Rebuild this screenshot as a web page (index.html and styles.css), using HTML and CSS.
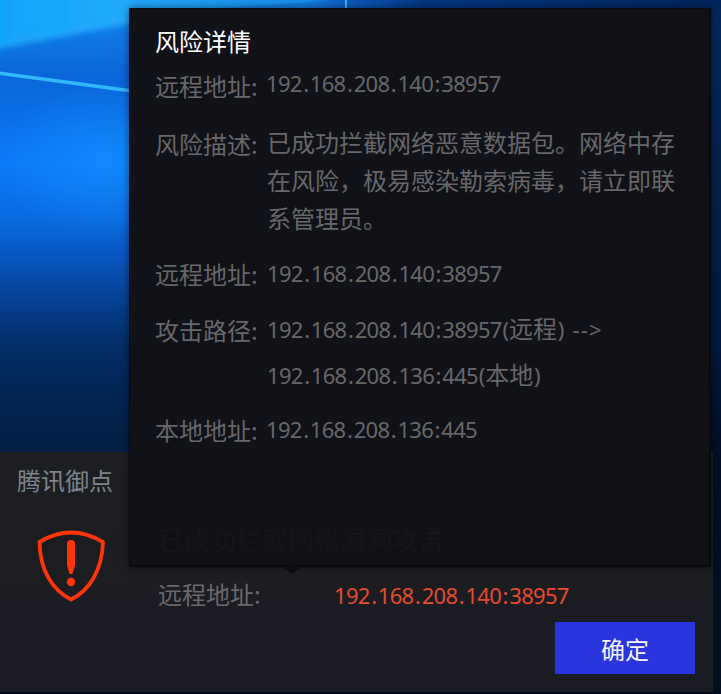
FILE: index.html
```html
<!DOCTYPE html>
<html lang="zh-CN">
<head>
<meta charset="utf-8">
<title>腾讯御点</title>
<link rel="stylesheet" href="styles.css">
</head>
<body>
<main class="desktop">
  <svg class="wallpaper" viewBox="0 0 721 694" preserveAspectRatio="none" aria-hidden="true">
    <defs>
      <linearGradient id="sky" x1="0" y1="0" x2="0" y2="452" gradientUnits="userSpaceOnUse">
        <stop offset="0" stop-color="#1688f0"/><stop offset=".16" stop-color="#0b66da"/>
        <stop offset=".24" stop-color="#0a6ce2"/><stop offset=".36" stop-color="#0c7af6"/>
        <stop offset=".48" stop-color="#0a6ae0"/><stop offset=".56" stop-color="#0858c4"/>
        <stop offset=".64" stop-color="#06459c"/><stop offset=".75" stop-color="#04306c"/>
        <stop offset=".87" stop-color="#032452"/><stop offset="1" stop-color="#031d42"/>
      </linearGradient>
      <linearGradient id="beam" x1="0" y1="0" x2="130" y2="0" gradientUnits="userSpaceOnUse">
        <stop offset="0" stop-color="#10a4fa"/><stop offset="1" stop-color="#22acfc"/>
      </linearGradient>
      <linearGradient id="top" x1="128" y1="0" x2="721" y2="0" gradientUnits="userSpaceOnUse">
        <stop offset="0" stop-color="#22a6fa"/><stop offset=".3" stop-color="#178eea"/>
        <stop offset=".37" stop-color="#0a5abc"/><stop offset=".5" stop-color="#053684"/><stop offset="1" stop-color="#03245a"/>
      </linearGradient>
      <linearGradient id="edge" x1="0" y1="0" x2="0" y2="694" gradientUnits="userSpaceOnUse">
        <stop offset="0" stop-color="#042860"/><stop offset=".2" stop-color="#03224e"/>
        <stop offset=".5" stop-color="#021a40"/><stop offset=".65" stop-color="#020f26"/><stop offset="1" stop-color="#02101e"/>
      </linearGradient>
      <radialGradient id="glow"><stop offset="0" stop-color="#158fff"/><stop offset="1" stop-color="#158fff" stop-opacity="0"/></radialGradient>
      <filter id="soft" x="-10%" y="-30%" width="120%" height="160%"><feGaussianBlur stdDeviation="3"/></filter>
      <filter id="fine" x="-10%" y="-50%" width="120%" height="200%"><feGaussianBlur stdDeviation=".7"/></filter>
    </defs>
    <rect width="721" height="694" fill="url(#sky)"/>
    <ellipse cx="105" cy="160" rx="110" ry="75" fill="url(#glow)" opacity=".7"/>
    <path d="M-10-10H150V19L-10 50Z" fill="url(#beam)" filter="url(#soft)"/>
    <path d="M-5 46L130 20" stroke="#39b6fa" stroke-width="4" opacity=".35" filter="url(#soft)"/>
    <path d="M-2 73L132 91" stroke="#30b8f8" stroke-width="3.4" filter="url(#fine)"/>
    <rect x="128" width="593" height="9" fill="url(#top)"/>
    <path d="M205 9L345 0L347 9Z" fill="#1263cc" opacity=".45"/>
    <path d="M346 0V9" stroke="#42b2ec" stroke-width="2"/>
    <rect x="710" y="9" width="11" height="685" fill="url(#edge)"/>
    <rect y="691" width="721" height="3" fill="#020b1d"/>
  </svg>

  <section class="alert">
    <h1 class="alert-title">腾讯御点</h1>
    <div class="alert-body">
      <svg class="shield" viewBox="0 0 70 74" aria-hidden="true">
        <path d="M3.5 14Q35-5 67 14C66 42 54 62 35 71.5C16 62 4 42 3.5 14Z" fill="none" stroke="#ff3508" stroke-width="3.8" stroke-linejoin="round"/>
        <path d="M31 16Q31 12 35 12T39 16V37L36.5 46H33.5L31 37Z" fill="#ff3508"/>
        <circle cx="35" cy="54" r="4.2" fill="#ff3508"/>
      </svg>
      <div class="alert-info">
        <p class="summary">已成功拦截网络漏洞攻击</p>
        <p class="remote"><span class="remote-label">远程地址:</span><span class="ip">192<i>.</i>168<i>.</i>208<i>.</i>140<i>:</i>38957</span></p>
      </div>
    </div>
    <button class="confirm" type="button">确定</button>
  </section>

  <aside class="details">
    <h2 class="details-title">风险详情</h2>
    <dl class="rows">
      <div class="row row-first"><dt>远程地址:</dt><dd class="ip">192<i>.</i>168<i>.</i>208<i>.</i>140<i>:</i>38957</dd></div>
      <div class="row row-desc"><dt>风险描述:</dt><dd class="prose">已成功拦截网络恶意数据包。网络中存在风险，极易感染勒索病毒，请立即联系管理员。</dd></div>
      <div class="row row-remote"><dt>远程地址:</dt><dd class="ip">192<i>.</i>168<i>.</i>208<i>.</i>140<i>:</i>38957</dd></div>
      <div class="row row-path"><dt>攻击路径:</dt><dd class="ip">192<i>.</i>168<i>.</i>208<i>.</i>140<i>:</i>38957<u>(</u><b>远程</b><u>)</u> <s>--&gt;</s><br>192<i>.</i>168<i>.</i>208<i>.</i>136<i>:</i>445<u>(</u><b>本地</b><u>)</u></dd></div>
      <div class="row row-local"><dt>本地地址:</dt><dd class="ip">192<i>.</i>168<i>.</i>208<i>.</i>136<i>:</i>445</dd></div>
    </dl>
    <svg class="tail" viewBox="0 0 22 10" aria-hidden="true"><path d="M0 0H22L11 9Z" fill="#0c0d10"/></svg>
  </aside>
</main>
</body>
</html>
```
FILE: styles.css
```css
* { box-sizing: border-box; margin: 0; padding: 0; }

body {
  width: 721px;
  height: 694px;
  overflow: hidden;
  font: 24px/32px "Noto Sans CJK SC", sans-serif;
  color: #67676a;
}

.desktop {
  position: relative;
  display: flex;
  flex-direction: column;
  justify-content: flex-end;
  width: 721px;
  height: 694px;
  padding-bottom: 2px;
}

.wallpaper { position: absolute; inset: 0; width: 721px; height: 694px; }

.alert {
  position: relative;
  display: flex;
  flex-direction: column;
  width: 713px;
  height: 240px;
  padding: 12px 18px 18px 17px;
  background: linear-gradient(#1d1e21 0, #1c1d20 130px, #1b1b24 160px);
}

.alert-title { font-size: 24px; line-height: 32px; font-weight: 400; color: #7d838d; }

.alert-body { display: flex; gap: 51px; padding: 32px 0 0 19px; }
.shield { flex: none; width: 70px; height: 74px; }
.alert-info { padding-left: 1px; }
/* Shows faintly through the details popup */
.summary { position: relative; z-index: 2; font-size: 26px; margin-top: -5px; color: #15161a; }
.remote { display: flex; margin-top: 23px; }
.remote-label { width: 176px; color: #69696b; }
.remote .ip { color: #e54b2d; padding-top: 1px; }

.confirm {
  align-self: flex-end;
  width: 140px;
  height: 52px;
  margin-top: auto;
  padding-top: 1px;
  border: 0;
  background: #2b35df;
  color: #f4f5ff;
  font: 24px/51px "Noto Sans CJK SC", sans-serif;
}

.details {
  position: absolute;
  z-index: 1;
  left: 129px;
  top: 8px;
  width: 582px;
  height: 559px;
  padding: 16px 25px;
  background: #111217;
  border: 1px solid #0a0b0e;
  border-width: 1px 2px 2px 1px;
  box-shadow: 0 0 8px rgba(0, 0, 0, .5);
}

.details-title { font-size: 24px; line-height: 32px; font-weight: 400; color: #fff; }

.row { display: grid; grid-template-columns: 112px 1fr; }
.row dt { white-space: nowrap; }
.row-first { margin-top: 13px; }
.row-desc { margin-top: 26px; }
.row-remote { margin-top: 21px; }
.row-path { margin-top: 24px; }
.row-local { margin-top: 16px; }

.prose { line-height: 38px; margin-top: -5px; width: 412px; }

.ip {
  font-family: "Noto Sans", "Noto Sans CJK SC", sans-serif;
  font-size: 22px;
  letter-spacing: -.68px;
  white-space: nowrap;
}
.ip i { font-style: normal; padding: 0 1.45px; }
.ip b { font: 400 24px/1 "Noto Sans CJK SC", sans-serif; letter-spacing: 0; }
.ip u { text-decoration: none; padding: 0 .7px; }
.ip s { text-decoration: none; letter-spacing: 1.2px; margin-left: 3px; }

.row-first .ip { margin: -3px 0 0 -1px; }
.row-remote .ip { margin-top: -1px; }
.row-path .ip { line-height: 46px; margin-top: -8px; }
.row-local .ip { margin: -1px 0 0 -1px; }

.tail { position: absolute; left: 151px; top: 556px; width: 22px; height: 10px; }
```
